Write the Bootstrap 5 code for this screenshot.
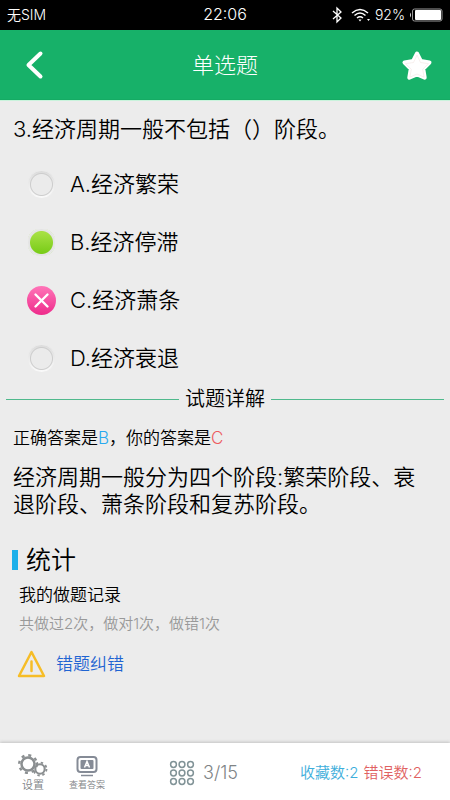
<!DOCTYPE html>
<html lang="zh-CN">
<head>
<meta charset="utf-8">
<meta name="viewport" content="width=device-width, initial-scale=1">
<title>单选题</title>
<link href="https://cdn.jsdelivr.net/npm/bootstrap@5.3.0/dist/css/bootstrap.min.css" rel="stylesheet">
<style>
body{font-family:Inter,"Noto Sans CJK SC",sans-serif;background:#ececec;color:#000;line-height:1.2;font-weight:350}
.status{background:#000;height:30px;font-size:14px;padding:0 7px}
.status-side{flex:1 1 0}
.topbar{background:#17b169;height:70px;padding:2px 16px 0 18px;border-bottom:1px solid #15ab64}
.topbar h1{font-size:22px;font-weight:300}
.plain{background:none;border:0;padding:0;color:inherit;font-weight:inherit}
main{border-top:1px solid #c9f3dc}
.question{font-size:22px;line-height:28px;padding:14px 13px 0}
.opts{padding:12px 27px 0}
.opt{height:58px;font-size:22px;gap:14px}
.pick{appearance:none;width:29px;height:29px;margin:0;border-radius:50%;flex:none;
 background:radial-gradient(circle,#ebebeb 10px,#cdcdcd 11px,transparent 12px),linear-gradient(#dcdcdc,#fafafa);border:1px solid #ececec}
.pick.right{background:radial-gradient(circle,transparent 11px,#e4e4e4 12px),linear-gradient(#a6e043 4px,#79cc18 24px)}
.pick.wrong{border:0;background:linear-gradient(#ff75b8,#ee2b8b)}
.pick-box{position:relative;line-height:0}
.pick-box svg{position:absolute;left:0;top:0;pointer-events:none}
.divider{line-height:24px;gap:6px;padding:0 6px}
.divider h2{font-size:20px;font-weight:350}
.rule{height:1px;background:#4fb98c}
.answer{font-size:17px;line-height:24px;padding:15px 13px 0}
.blue{color:#27a9ef}.red{color:#ed5b5e}
.explain{font-size:22px;line-height:27px;padding:14px 20px 0 13px}
.stats{padding:27px 12px 0}
.stats h2{font-size:25px;line-height:30px;font-weight:350}
.bar{width:6px;height:20px;background:#1cb0ea}
.record{font-size:17px;line-height:24px;padding:8px 7px 0}
.count{font-size:15px;line-height:20px;color:#999;padding:7px 7px 0}
.report{font-size:17px;color:#1f64d2;gap:10px;padding:16px 5px 0}
.report:hover{color:#1f64d2}
.bottom{background:#fff;height:57px;padding:2px 28px 0 15px;box-shadow:0 -1px 3px #c2c2c2;color:#808486}
.tool{font-size:11px;line-height:14px;width:36px}
.tool.wide{font-size:9px;width:40px}
.page{font-size:18px;font-weight:300;gap:8px}
.totals{font-size:15px;gap:5px}
.totals .blue{color:#3daedb}.totals .red{color:#e06161}
</style>
<script src="https://cdn.jsdelivr.net/npm/bootstrap@5.3.0/dist/js/bootstrap.bundle.min.js"></script>
</head>
<body>
<div class="d-flex flex-column min-vh-100">
 <div class="status d-flex align-items-center text-white">
  <div class="status-side">无SIM</div>
  <div class="fs-6">22:06</div>
  <div class="status-side d-flex justify-content-end align-items-center gap-1">
   <svg width="12" height="18" viewBox="0 0 12 18" fill="none" stroke="#fff" stroke-width="1.3"><path d="M2 5l8 7-4 4V2l4 4-8 7"/></svg>
   <svg class="ms-1" width="20" height="14" viewBox="0 0 20 14" fill="none" stroke="#fff" stroke-width="1.5"><path d="M1 5q8-7 16 0M3.500 7.500q5.500-5 11 0M6 10q3-2.500 6 0"/><path d="M7.500 11.500h3L9 13.500zM16 11h3l-1.500 2z" fill="#fff" stroke="none"/></svg>
   <span>92%</span>
   <svg width="34" height="14" viewBox="0 0 34 14"><path d="M2 4.500Q0 7 2 9.500z" fill="#ddd"/><rect x="3.500" y="1" width="29.500" height="12" rx="2" fill="none" stroke="#999"/><rect x="6" y="2" width="26" height="10" rx="1" fill="#fff"/></svg>
  </div>
 </div>
 <header class="topbar d-flex align-items-center justify-content-between text-white">
  <button class="plain" type="button" aria-label="返回"><svg width="32" height="32" viewBox="0 0 32 32" fill="none" stroke="#fff" stroke-width="4" stroke-linecap="round" stroke-linejoin="round"><path d="M22.500 3.500L10.500 15l12 11.500"/></svg></button>
  <h1 class="m-0">单选题</h1>
  <button class="plain" type="button" aria-label="收藏"><svg width="34" height="34" viewBox="0 0 34 34"><path d="M17 4.500l3.800 7.500 8.700 1.500-6.300 6.200 1.500 9L17 25.500l-7.700 3.200 1.500-9-6.300-6.200 8.700-1.500z" fill="#fff" stroke="#fff" stroke-width="4" stroke-linejoin="round"/><path d="M17 6l3.500 7.500 8 1.200-5.800 5.500 1.400 8L17 25l-7.100 3.200 1.400-8-5.800-5.500 8-1.200z" fill="none" stroke="#f3e9e6" stroke-width=".7"/></svg></button>
 </header>
 <main class="flex-grow-1 pb-4">
  <p class="question m-0">3.经济周期一般不包括（）阶段。</p>
  <div class="opts">
   <div class="opt d-flex align-items-center"><span class="pick-box"><input class="pick" type="radio" name="q" id="a"></span><label for="a">A.经济繁荣</label></div>
   <div class="opt d-flex align-items-center"><span class="pick-box"><input class="pick right" type="radio" name="q" id="b"></span><label for="b">B.经济停滞</label></div>
   <div class="opt d-flex align-items-center"><span class="pick-box"><input class="pick wrong" type="radio" name="q" id="c" checked><svg width="29" height="29" viewBox="0 0 29 29" stroke="#fff" stroke-width="2.400" stroke-linecap="round"><path d="M8.500 8.500l12 12M20.500 8.500l-12 12"/></svg></span><label for="c">C.经济萧条</label></div>
   <div class="opt d-flex align-items-center"><span class="pick-box"><input class="pick" type="radio" name="q" id="d"></span><label for="d">D.经济衰退</label></div>
  </div>
  <div class="divider d-flex align-items-center"><div class="rule flex-grow-1"></div><h2 class="m-0">试题详解</h2><div class="rule flex-grow-1"></div></div>
  <p class="answer m-0">正确答案是<span class="blue">B</span>，你的答案是<span class="red">C</span></p>
  <p class="explain m-0">经济周期一般分为四个阶段:繁荣阶段、衰退阶段、萧条阶段和复苏阶段。</p>
  <section class="stats">
   <div class="d-flex align-items-center gap-2"><span class="bar"></span><h2 class="m-0">统计</h2></div>
   <div class="record">我的做题记录</div>
   <div class="count">共做过2次，做对1次，做错1次</div>
   <a href="#" class="report d-inline-flex align-items-center text-decoration-none"><svg width="29" height="28" viewBox="0 0 29 28" fill="none" stroke="#f6bd27" stroke-width="2.500" stroke-linejoin="round" stroke-linecap="round"><path d="M14.500 2L27 26H2zM14.500 11.500v9.500"/></svg>错题纠错</a>
  </section>
 </main>
 <footer class="bottom d-flex align-items-center justify-content-between">
  <div class="d-flex gap-3 align-items-end">
   <button class="plain tool d-flex flex-column align-items-center" type="button">
    <svg width="30" height="24" viewBox="0 0 30 24" fill="none" stroke="#8b8f91"><circle cx="10" cy="10" r="6.500" stroke-width="2.500"/><circle cx="10" cy="10" r="8.800" stroke-width="2.400" stroke-dasharray="3 3.910"/><circle cx="22" cy="15" r="4.700" stroke-width="2.100"/><circle cx="22" cy="15" r="6.500" stroke-width="1.800" stroke-dasharray="2.400 2.705"/></svg>设置</button>
   <button class="plain tool wide d-flex flex-column align-items-center" type="button">
    <svg width="24" height="24" viewBox="0 0 24 24" fill="none" stroke="#858b96"><rect x="2.500" y="3" width="19" height="15" rx="3" stroke-width="2"/><rect x="5.500" y="6" width="13" height="9" rx="1" fill="#858b96" stroke="none"/><path d="M9.500 13.500L12 7.500l2.500 6M10.500 11.500h3" stroke="#fff" stroke-width="1.500"/><path d="M6 21.500h12" stroke-width="1.500"/></svg>查看答案</button>
  </div>
  <button class="plain page d-flex align-items-center" type="button">
   <svg width="26" height="26" viewBox="0 0 26 26" fill="none" stroke="#819397" stroke-width="1.500"><circle cx="4.500" cy="4.500" r="2.900"/><circle cx="13" cy="4.500" r="2.900"/><circle cx="21.500" cy="4.500" r="2.900"/><circle cx="4.500" cy="13" r="2.900"/><circle cx="13" cy="13" r="2.900"/><circle cx="21.500" cy="13" r="2.900"/><circle cx="4.500" cy="21.500" r="2.900"/><circle cx="13" cy="21.500" r="2.900"/><circle cx="21.500" cy="21.500" r="2.900"/></svg>3/15</button>
  <div class="totals d-flex"><span class="blue">收藏数:2</span><span class="red">错误数:2</span></div>
 </footer>
</div>
</body>
</html>
